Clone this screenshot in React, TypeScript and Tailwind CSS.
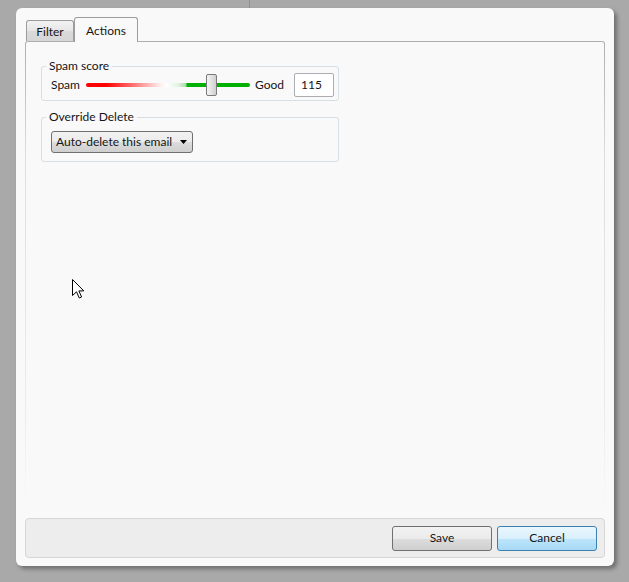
import React from "react";

const font = "font-['Lato','Open_Sans',sans-serif]";

export default function App() {
  return (
    <div className={`relative w-[629px] h-[582px] bg-[#a9a9a9] overflow-hidden ${font} text-[12px] text-[#151515]`}>
      <div className="absolute left-[249px] top-0 h-[8px] w-px bg-[#929292]" />
      <div className="ml-[16px] mt-[8px] w-[598px] h-[558px] rounded-[6px] bg-[#f9f9f9] shadow-[3px_3px_4px_rgba(0,0,0,0.35)] flex flex-col px-[9px] pt-[9px] pb-[8px]">
        {/* tabs */}
        <div className="flex items-end h-[24px] pl-px relative z-10">
          <div className="h-[21px] w-[48px] flex items-center justify-center border border-b-0 border-[#9c9c9c] rounded-t-[3px] bg-[linear-gradient(to_bottom,#f3f3f3,#e6e6e6_50%,#dadada_50%,#d6d6d6)] leading-none pt-[2px]">
            Filter
          </div>
          <div className="h-[25px] w-[64px] -mb-px flex items-center justify-center border border-b-0 border-[#9c9c9c] rounded-t-[3px] bg-[#f9f9f9] leading-none pt-[2px]">
            Actions
          </div>
        </div>
        {/* panel */}
        <div className="flex-1 rounded-[3px] pt-px px-px bg-[linear-gradient(to_bottom,#aeaeae,#dedede_25%,#ececec_80%,#f9f9f9)] mb-[7px]">
          <div className="h-full rounded-[2px] bg-[#f9f9f9] pl-[15px] pt-[16px]">
            <fieldset className="w-[298px] border border-[#d5dfe5] rounded-[3px] pl-[9px] pb-[3px]">
              <legend className="-ml-[5px] px-[3px] leading-[16px]">Spam score</legend>
              <div className="flex items-center h-[24px] -mt-[1px]">
                <span className="w-[35px] leading-none">Spam</span>
                <div className="relative w-[164px] h-[22px] flex items-center">
                  <div className="w-full h-[4px] rounded-full bg-[linear-gradient(to_right,#ff0000_0%,#ff0000_12%,#ff7a7a_30%,#ffb8b8_38%,#fff0f0_46%,#ffffff_49%,#e2f3e2_56%,#a8dca8_61%,#00b000_61.5%,#00b000_100%)]" />
                  <div className="absolute left-[120px] top-0 w-[11px] h-[22px] rounded-[2px] border border-[#7a7a7a] bg-[linear-gradient(to_right,#f4f4f4,#e2e2e2_50%,#cfcfcf)]" />
                </div>
                <span className="ml-[5px] w-[39px] leading-none">Good</span>
                <div className="w-[40px] h-[24px] border border-[#abadb3] rounded-[2px] bg-white flex items-center pl-[6px] leading-none">
                  115
                </div>
              </div>
            </fieldset>
            <fieldset className="mt-[8px] w-[298px] border border-[#d5dfe5] rounded-[3px] pl-[9px] pb-[8px]">
              <legend className="-ml-[5px] px-[3px] leading-[16px]">Override Delete</legend>
              <div className="mt-[6px] w-[142px] h-[22px] border border-[#707070] rounded-[3px] bg-[linear-gradient(to_bottom,#f2f2f2,#ebebeb_50%,#dddddd_50%,#cfcfcf)] flex items-center pl-[4px] pr-[5px] leading-none">
                <span className="flex-1">Auto-delete this email</span>
                <svg width="7" height="4" viewBox="0 0 7 4"><path d="M0 0H7L3.5 4Z" fill="#000" /></svg>
              </div>
            </fieldset>
          </div>
        </div>
        {/* button bar */}
        <div className="h-[40px] rounded-[4px] border border-[#d6d6d6] bg-[#ededed] flex items-center justify-end gap-[5px] pr-[7px]">
          <button className="w-[100px] h-[25px] border border-[#707070] rounded-[3px] bg-[linear-gradient(to_bottom,#f2f2f2,#ebebeb_50%,#dddddd_50%,#cfcfcf)] leading-none">
            Save
          </button>
          <button className="w-[100px] h-[25px] border border-[#3c7fb1] rounded-[3px] bg-[linear-gradient(to_bottom,#eaf6fd,#d9f0fc_50%,#bee6fd_50%,#a7d9f5)] leading-none">
            Cancel
          </button>
        </div>
      </div>
      {/* mouse cursor */}
      <svg className="absolute left-[72px] top-[279px]" width="13" height="20" viewBox="0 0 13 20">
        <path d="M0.5 0.5 L0.5 16.5 L4.5 12.8 L7.3 19 L9.6 18 L6.9 11.9 L11.8 11.9 Z" fill="#fff" stroke="#000" strokeWidth="1" strokeLinejoin="miter" />
      </svg>
    </div>
  );
}
